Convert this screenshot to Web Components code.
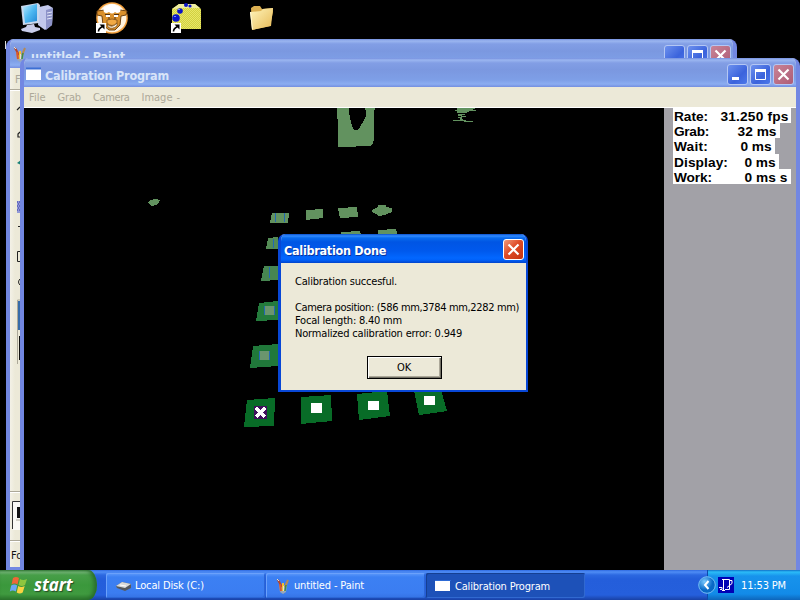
<!DOCTYPE html>
<html lang="en">
<head>
<meta charset="utf-8">
<title>Calibration Program</title>
<style>
html,body{margin:0;width:800px;height:600px;overflow:hidden;background:#000}
</style>
</head>
<body>
<xp-desktop></xp-desktop>
<script>
const paintIcon = `<svg viewBox="0 0 14 16" width="14" height="16"><path d="M3 7l8 0-1 7-3 2-3-2z" fill="#9aa8b8"/><path d="M2 2l4 7" stroke="#b8452a" stroke-width="2"/><path d="M7 5v8" stroke="#f1c232" stroke-width="2"/><path d="M12 2L9 9" stroke="#b58a55" stroke-width="2"/><path d="M4 6l1 7" stroke="#d9582c" stroke-width="2"/><path d="M10 7l-1 6" stroke="#3d8c49" stroke-width="1.500"/><path d="M1 1l2 2M7.500 8v5" stroke="#e8e0c8"/></svg>`;

// Text run whose tracking is adjusted so that it spans the width given in "w".
class XpText extends HTMLElement {
  connectedCallback() {
    if (this.shadowRoot) return;
    const r = this.attachShadow({mode: 'open'});
    r.innerHTML = `<style>:host{display:inline-block;white-space:pre;flex:none}span{display:inline-block;white-space:pre}</style><span><slot></slot></span>`;
    const w = +this.getAttribute('w'), s = r.querySelector('span');
    if (w) s.style.letterSpacing = ((w - s.getBoundingClientRect().width) / this.textContent.length).toFixed(3) + 'px';
  }
}

class XpButton extends HTMLElement {
  connectedCallback() {
    const k = this.getAttribute('kind'), off = this.hasAttribute('inactive');
    const g = {min: '<rect x="5" y="13" width="7" height="3" fill="#fff"/>',
      blank: '',
      max: '<path d="M5.500 6v9.500h10V6" fill="none" stroke="#fff"/><rect x="5" y="5" width="11" height="3" fill="#fff"/>',
      close: '<path d="M5.500 5.500l10 10m0-10l-10 10" stroke="#fff" stroke-width="2.200"/>'}[k];
    const bg = k === 'close' ? (off ? 'linear-gradient(135deg,#c98396,#ad5c76)' : 'linear-gradient(135deg,#f09a7c,#df4b27 45%,#c3320f)')
      : 'linear-gradient(135deg,#6d91ee,#3b63dc 60%,#4c78ea)';
    this.attachShadow({mode: 'open'}).innerHTML = `<style>:host{display:block;width:21px;height:21px;box-sizing:border-box;border:1px solid ${off ? '#b4c7f4' : '#fff'};border-radius:3px;background:${bg};flex:none}svg{display:block;margin:-1px}</style><svg width="21" height="21">${g}</svg>`;
  }
}

class XpWindow extends HTMLElement {
  connectedCallback() {
    this.attachShadow({mode: 'open'}).innerHTML = `<style>
    :host{display:flex;flex-direction:column;box-sizing:border-box;border:solid #7287e2;border-width:0 4px 3px;border-radius:8px 8px 0 0;background:#ece9d8;overflow:hidden;font:11px "DejaVu Sans Condensed","DejaVu Sans",sans-serif}
    header{display:flex;flex:none;height:29px;margin:0 -4px;padding:0 6px 0 9px;box-sizing:border-box;align-items:center;background:linear-gradient(#7590df,#9bb6f0 2px,#829ee5 5px,#7b98e0 12px,#7e9fe7 22px,#8badf1 26px,#748ee0)}
    .t{font:bold 12.500px "DejaVu Sans Condensed","DejaVu Sans",sans-serif;color:#d8e4f8;margin-left:3px;padding-top:7px;flex:1;line-height:16px}
    .i{padding-top:3px;display:flex}.b{display:flex;gap:2px;padding-top:3px}
    main{flex:1;min-height:0;display:flex;flex-direction:column}
    </style><header><div class="i"><slot name="icon"></slot></div><div class="t"><slot name="title"></slot></div><div class="b"><slot name="buttons"></slot></div></header><main><slot></slot></main>`;
  }
}

class PaintTools extends HTMLElement {
  connectedCallback() {
    this.attachShadow({mode: 'open'}).innerHTML = `<style>:host{display:block;position:relative;height:499px;background:linear-gradient(90deg,#f3f1e7,#ece9d8 5px)}svg{display:block}</style>
    <svg width="12" height="499" font-family="DejaVu Sans Condensed,DejaVu Sans" font-size="11"><text x="5" y="15" fill="#aaa799">F</text><path d="M0 21.500h12M0 423.500h12M0 472.500h12" stroke="#aca899"/><path d="M0 22.500h12M0 424.500h12M0 473.500h12" stroke="#fff"/>
    <path d="M7 42l3-3M10 64l-2 2v3h3M8 158.500h3" stroke="#222" fill="none" stroke-width="1.200"/><path d="M7 95l4-3v5z" fill="#178077"/>
    <path d="M7 133h4v12h-4z" fill="#9199d7"/><path d="M7 134h4m-3 2h3m-4 2h4m-3 2h3m-4 2h4" stroke="#3535a5" stroke-dasharray="1 1"/>
    <path d="M11 183.500H7.500v10H11" fill="none" stroke="#222"/><path d="M11 210q-5 4 0 8" fill="none" stroke="#222"/>
    <path d="M7.500 296v-64H12" fill="none" stroke="#aca899"/><rect x="8" y="233" width="4" height="29" fill="#376ca9"/><path d="M9.500 268v24" stroke="#111"/>
    <path d="M12 433.500H2.500V461" fill="none" stroke="#333"/><rect x="3" y="434" width="9" height="28" fill="#faf9f5"/><rect x="7" y="439" width="5" height="11" fill="#111"/><path d="M6 452h6" stroke="#aca899"/></svg>
    <style>xp-text{position:absolute;left:1px;top:481px;color:#111}</style><xp-text>Fo</xp-text>`;
  }
}

class CalMenu extends HTMLElement {
  connectedCallback() {
    this.attachShadow({mode: 'open'}).innerHTML = `<style>:host{display:flex;flex:none;height:20px;box-sizing:content-box;gap:12px;padding-left:5px;color:#aca899;line-height:21px;border-bottom:1px solid #fff}xp-text:last-child{margin-left:-8px}</style>
    <xp-text w="16.500">File</xp-text><xp-text w="23.500">Grab</xp-text><xp-text w="36.500">Camera</xp-text><xp-text w="31">Image</xp-text><xp-text>-</xp-text>`;
  }
}

class CalStats extends HTMLElement {
  connectedCallback() {
    const rows = [['Rate:', 34, '31.250 fps', 68, 47, 118], ['Grab:', 35, '32 ms', 39, 64, 107], ['Wait:', 34, '0 ms', 31, 67, 102], ['Display:', 54, '0 ms', 31, 71, 106], ['Work:', 38, '0 ms s', 43, 71, 118]];
    this.attachShadow({mode: 'open'}).innerHTML = `<style>:host{display:block;width:132px;background:#a2a1a7;padding-left:9px;box-sizing:border-box;font:bold 13.700px "Liberation Sans",Arial,sans-serif;color:#000}div{display:flex;height:15.200px;line-height:17px;background:#fff;padding-left:1px;box-sizing:border-box}</style>` +
    rows.map(r => `<div style="width:${r[5]}px"><xp-text w="${r[1]}">${r[0]}</xp-text><xp-text w="${r[3]}" style="margin-left:${r[4] - r[1] - 0.5}px">${r[2]}</xp-text></div>`).join('');
  }
}

class CalView extends HTMLElement {
  connectedCallback() {
    this.attachShadow({mode: 'open'}).innerHTML = `<style>:host{display:block;width:640px;height:462px;background:#000;overflow:hidden;flex:none}svg{display:block}</style>
    <svg width="640" height="462" viewBox="24 108 640 462" shape-rendering="crispEdges">
    <g fill="#62925f"><path d="M337 108h12v3l1 7 2 8 2 4h3l3-3 3-5 3-6v-5l-1-3h10l-1 4v28l-2 5-3 1h-12l-2 1h-17v-17z"/>
    <path d="M457 108h18v1h-2v1h3v1h-7v1h-2v1h-10v-2h-2v-1h2zM458 114h7v1h-3v1h4v1h-4v2h1v1h3v1h7v1h-9v-1h-11v-1h7v-2h-2v-1h3v-1h-3zM148 203l2-3 5-1 5 1-2 4-6 2z"/>
    <path d="M272 213h17l-1 10h-18zM306 210l17-1v9l-17 2zM338 208l19-1 1 10-18 1zM372 210l6-3v-2h8v2l6 1v4l-3 1-4 2-7 1-1-2-4-1zM341 232l19-1 1 4h-20zM378 230l18-1 2 6h-20zM318 234h6v1h-6z"/></g>
    <path d="M268 238l10-1v12h-12z" fill="#548b55"/><path d="M264 266h14v14l-17 1z" fill="#478651"/><path d="M259 303l19-2v19l-22 1z" fill="#247b3c"/><path d="M253 346l25-2v22l-28 2z" fill="#20783a"/>
    <path d="M264 306h11v9h-11zM259 351h11v9h-11z" fill="#6b966e"/>
    <path d="M275 213h1v9h-1zM284 213h1v9h-1zM273 239h1v9h-1zM269 267h1v11h-1zM264 306h1v9h-1zM274 306h1v9h-1zM259 351h1v9h-1zM269 351h1v9h-1z" fill="#2268b4"/>
    <path d="M247 400l28-2-1 28-30 1zM301 397l30-2 1 26-31 3zM357 394l30-3 3 25-31 4zM414 391l27-1 6 21-28 4z" fill="#086c27"/>
    <path d="M311 403h11v10h-11zM368 401h11v9h-11zM424 396h11v9h-11z" fill="#fff"/>
    <rect x="254" y="406" width="13" height="13" fill="#42105e"/><path d="M256 408l9 9m0-9l-9 9" stroke="#fff" stroke-width="3"/></svg>`;
  }
}

class XpDialog extends HTMLElement {
  connectedCallback() {
    this.attachShadow({mode: 'open'}).innerHTML = `<style>
    :host{display:flex;flex-direction:column;box-sizing:border-box;background:#ece9d8;border:solid #0847d6;border-width:0 2px 2px 3px;border-radius:7px 7px 0 0;overflow:hidden;color:#000;font:11px/13px "DejaVu Sans Condensed","DejaVu Sans",sans-serif}
    header{height:29px;margin:0 -2px 0 -3px;padding:2px 4px 0 6px;box-sizing:border-box;display:flex;align-items:center;justify-content:space-between;background:linear-gradient(#0a50cc,#318bff 2px,#086bee 4px,#0055e4 8px,#0059ed 17px,#0267ff 24px,#0061fa 26px,#0144cb);font:bold 12.500px "DejaVu Sans Condensed","DejaVu Sans",sans-serif;color:#fff;text-shadow:1px 1px #0835a0}
    header xp-text{padding-top:1px}
    section{display:flex;flex-direction:column;align-items:flex-start;padding:12px 0 0 14px}
    .gap{height:13px}
    .ok{align-self:center;width:75px;height:23px;margin:16px 13px 0 0;box-sizing:border-box;border:1px solid #000;box-shadow:inset 1px 1px #fff,inset -1px -1px #716f64,inset -2px -2px #aca899;display:grid;place-items:center}
    </style><header><xp-text w="102">Calibration Done</xp-text><xp-button kind="close"></xp-button></header>
    <section><xp-text w="102">Calibration succesful.</xp-text><div class="gap"></div><xp-text w="224">Camera position: (586 mm,3784 mm,2282 mm)</xp-text><xp-text w="107">Focal length: 8.40 mm</xp-text><xp-text w="167">Normalized calibration error: 0.949</xp-text><div class="ok"><xp-text w="14">OK</xp-text></div></section>`;
  }
}

class XpTask extends HTMLElement {
  connectedCallback() {
    const a = this.hasAttribute('active');
    this.attachShadow({mode: 'open'}).innerHTML = `<style>:host{display:flex;align-items:center;box-sizing:border-box;width:159px;height:25px;padding:${a ? '2px 0 0 9px' : '0 0 0 10px'};gap:3px;border-radius:2px;color:#fff;flex:none;background:${a ? '#1d51b8' : 'linear-gradient(#5f9bfb,#3c80f3 4px,#3b7df1 20px,#3572e4)'};box-shadow:${a ? 'inset 1px 1px #153f92,inset -1px -1px #3169d0' : 'inset 1px 1px #6ba1fb,inset -1px -1px #2b66d6'}}</style><slot name="icon"></slot><slot></slot>`;
  }
}

class XpTaskbar extends HTMLElement {
  connectedCallback() {
    this.attachShadow({mode: 'open'}).innerHTML = `<style>
    :host{display:flex;height:30px;background:linear-gradient(#2f6ae0,#4f8df5 2px,#2c68e1 5px,#245edb 9px,#255fdc 25px,#1941a5);font:11px "DejaVu Sans Condensed","DejaVu Sans",sans-serif;color:#fff}
    .start{width:97px;height:30px;border-radius:0 9px 9px 0/0 15px 15px 0;box-sizing:border-box;padding:0 0 0 9px;display:flex;gap:5px;align-items:center;background:linear-gradient(#3c8442,#75b879 2px,#479e48 5px,#3b983c 15px,#3f9a3f 24px,#2b762c);box-shadow:inset -3px 0 4px #286b2b;font:italic bold 17px "Open Sans","Noto Sans",sans-serif;text-shadow:1px 1px 1px #244c25}
    .start xp-text{margin-top:-2px}
    .tasks{display:flex;gap:1px;padding:3px 0 0 9px;flex:1}
    .tray{width:93px;height:30px;box-sizing:border-box;background:linear-gradient(#1170c9,#2bbcf8 2px,#1793ec 6px,#128be8 24px,#0d65ba);border-left:1px solid #0d4baa;display:flex;align-items:center}
    .tray svg{display:block}.arrow{margin-left:-10px}.tray xp-text{margin-left:7px}
    </style>
    <div class="start"><svg width="20" height="19" style="margin-top:-1px"><path d="M4 3q3-2 6 0l-1.500 6.500q-3-2-6 0z" fill="#ef6638"/><path d="M11 4q3 2 7 0l-2 6q-3 2-6.500 0z" fill="#8dc63f"/><path d="M2.200 10.500q3-2 6 0L6.800 16.500q-3-2-6 0z" fill="#6ba6f5"/><path d="M9.200 11q3 2 6.500 0l-2 6.500q-3 2-6 0z" fill="#f9d342"/></svg><xp-text w="38.500">start</xp-text></div>
    <div class="tasks">
    <xp-task><svg slot="icon" width="16" height="16"><path d="M0 8l6-4 9 2v4l-6 3-8-3z" fill="#55595e"/><path d="M0 8l6-4 9 2-6 4z" fill="#d9dad8"/><path d="M4 7l6 1" stroke="#fff"/></svg><xp-text w="69">Local Disk (C:)</xp-text></xp-task>
    <xp-task><span slot="icon" style="display:flex;width:15px">${paintIcon}</span><xp-text w="70">untitled - Paint</xp-text></xp-task>
    <xp-task active><svg slot="icon" width="16" height="12" style="margin-top:-1px"><path d="M0 0h15v11H0z" fill="#fff"/><path d="M0 .5h16" stroke="#2d6ad5"/></svg><xp-text w="95" style="margin-left:1px">Calibration Program</xp-text></xp-task></div>
    <div class="tray"><svg class="arrow" width="18" height="20"><defs><radialGradient id="a" cx=".35" cy=".3"><stop stop-color="#7bcaff"/><stop offset="1" stop-color="#0869c6"/></radialGradient></defs><circle cx="9" cy="10" r="8.300" fill="url(#a)" stroke="#74bdf4"/><path d="M10.500 6L7 10l3.500 4" fill="none" stroke="#fff" stroke-width="2"/></svg>
    <svg style="margin-left:2px" width="16" height="16"><path d="M0 0h16v16H0z" fill="#0001b5"/><path d="M5.500 2v12M7 2.500h4.500v10H7M1 10.500h3v2H2M4 2.500h3M4 13.500h3" stroke="#fff" fill="none"/><path d="M12 3.500h2v3l-5 4" stroke="#fff" fill="none"/></svg><xp-text w="45">11:53 PM</xp-text></div>`;
  }
}

class DesktopIcons extends HTMLElement {
  connectedCallback() {
    this.attachShadow({mode: 'open'}).innerHTML = `<style>:host{display:block}svg{display:block}</style><svg width="300" height="55">
    <defs><linearGradient id="s" x2="1" y2="1"><stop stop-color="#bdeaff"/><stop offset=".5" stop-color="#50baf2"/><stop offset="1" stop-color="#2388d5"/></linearGradient><linearGradient id="f" x2="1" y2="1"><stop stop-color="#fff6bd"/><stop offset="1" stop-color="#e7b955"/></linearGradient><pattern id="d" width="2" height="2" patternUnits="userSpaceOnUse"><path d="M0 0h2v2H0z" fill="#d2d140"/><path d="M0 0h1v1H0zM1 1h1v1H1z" fill="#e8e768"/></pattern></defs>
    <path d="M39 7l9-2 5 3-1 17-7 5-7-5z" fill="#c2c8ec"/><path d="M46 10l7-2-1 17-6 5z" fill="#8d93c8"/><path d="M47 13l5-1m-5 4l5-1m-5 4l5-1" stroke="#e2e6f8"/><path d="M21 6l17-3 2 2-1 18-16 2z" fill="#c9d8ee"/><path d="M23 7l14-3v17l-12 2z" fill="url(#s)"/><path d="M27 25l7-1 1 3 5 1v2l-8 3-10-2-1-2 5-2z" fill="#c9cdea"/>
    <circle cx="112" cy="18" r="15.800" fill="#f3a13f"/><circle cx="112" cy="18" r="14.300" fill="#fff3df"/>
    <path d="M97 11l8-1h15l7 1-1 4-5 1-1 9-5 5h-6l-6-5-1-9-5-1z" fill="#d9902c" stroke="#704514"/>
    <path d="M104 12q-2-5 3-6 5-4 10 0 5 1 3 6-3 2-5 0-3 3-6 0-3 2-5 0z" fill="#fff"/>
    <path d="M106 15h4v2h-4zM114 15h4v2h-4z" fill="#fff"/><path d="M105 14.500h5m4 0h5M109 17v3m6-3v3" fill="none" stroke="#4e3214"/><path d="M107 20q5-2 10 0v3q-5 5-10 0z" fill="#f1a944" stroke="#704514" stroke-width=".7"/><path d="M107 24q5 5 10-1v3q-5 4-9 1z" fill="#fff4df" stroke="#704514" stroke-width=".7"/>
    <path d="M172 9l7-5h16l6 5v20h-29z" fill="url(#d)"/><path d="M172 9l7-5h16l5 4h-17z" fill="#eeeda0"/><g fill="#0a14c8"><circle cx="176" cy="18" r="3.800"/><circle cx="180" cy="11" r="2.800"/><circle cx="186" cy="5" r="2"/><circle cx="190" cy="6" r="1.600"/></g><path d="M174 16.500h2m2-7h2" stroke="#738aff"/>
    <g id="sc"><path d="M96 23h10v10H96z" fill="#fff"/><path d="M98.500 31.500q0-3 4-5" stroke="#000" stroke-width="1.600" fill="none"/><path d="M99.500 24.500h5v5z"/></g><use href="#sc" x="75"/>
    <path d="M251 8l3-2h6l2 3 11-1v4l-3 14-18 4z" fill="#dcb052"/><path d="M250 12l11-1 2-2 10-1-2 18-19 4z" fill="url(#f)"/><path d="M250.500 12l2 17" stroke="#fff7d2"/>
    <path d="M5.500 41v8" stroke="#ddd"/></svg>`;
  }
}

class XpDesktop extends HTMLElement {
  connectedCallback() {
    this.attachShadow({mode: 'open'}).innerHTML = `<style>
    :host{display:block;position:relative;width:800px;height:600px;background:#000;overflow:hidden}
    desktop-icons,xp-window,xp-dialog,xp-taskbar{position:absolute}
    desktop-icons{left:0;top:0}.paint{left:6px;top:39px;width:731px;height:531px}.cal{left:20px;top:58px;width:780px;height:515px}
    xp-dialog{left:278px;top:234px;width:250px;height:158px}xp-taskbar{left:0;top:570px;width:800px}
    .body{display:flex;flex:1;min-height:0}.body cal-stats{flex:1}
    </style>
    <desktop-icons></desktop-icons>
    <xp-window class="paint"><span slot="icon" style="margin:0 1px 0 -2px">${paintIcon}</span><xp-text slot="title" w="94">untitled - Paint</xp-text><xp-button slot="buttons" kind="blank" inactive></xp-button><xp-button slot="buttons" kind="max" inactive></xp-button><xp-button slot="buttons" kind="close" inactive></xp-button><paint-tools></paint-tools></xp-window>
    <xp-window class="cal"><svg slot="icon" width="16" height="14" style="margin-left:-3px"><path d="M0 1h15v12H0z" fill="#fff"/><path d="M0 1.500h15" stroke="#3c6fd4" stroke-width="2"/></svg><xp-text slot="title" w="124">Calibration Program</xp-text><xp-button slot="buttons" kind="min" inactive></xp-button><xp-button slot="buttons" kind="max" inactive></xp-button><xp-button slot="buttons" kind="close" inactive></xp-button>
    <cal-menu></cal-menu><div class="body"><cal-view></cal-view><cal-stats></cal-stats></div></xp-window>
    <xp-dialog></xp-dialog><xp-taskbar></xp-taskbar>`;
  }
}
customElements.define('xp-text', XpText);
customElements.define('xp-button', XpButton);
customElements.define('xp-window', XpWindow);
customElements.define('paint-tools', PaintTools);
customElements.define('cal-menu', CalMenu);
customElements.define('cal-stats', CalStats);
customElements.define('cal-view', CalView);
customElements.define('xp-dialog', XpDialog);
customElements.define('xp-task', XpTask);
customElements.define('xp-taskbar', XpTaskbar);
customElements.define('desktop-icons', DesktopIcons);
customElements.define('xp-desktop', XpDesktop);
</script>
</body>
</html>
